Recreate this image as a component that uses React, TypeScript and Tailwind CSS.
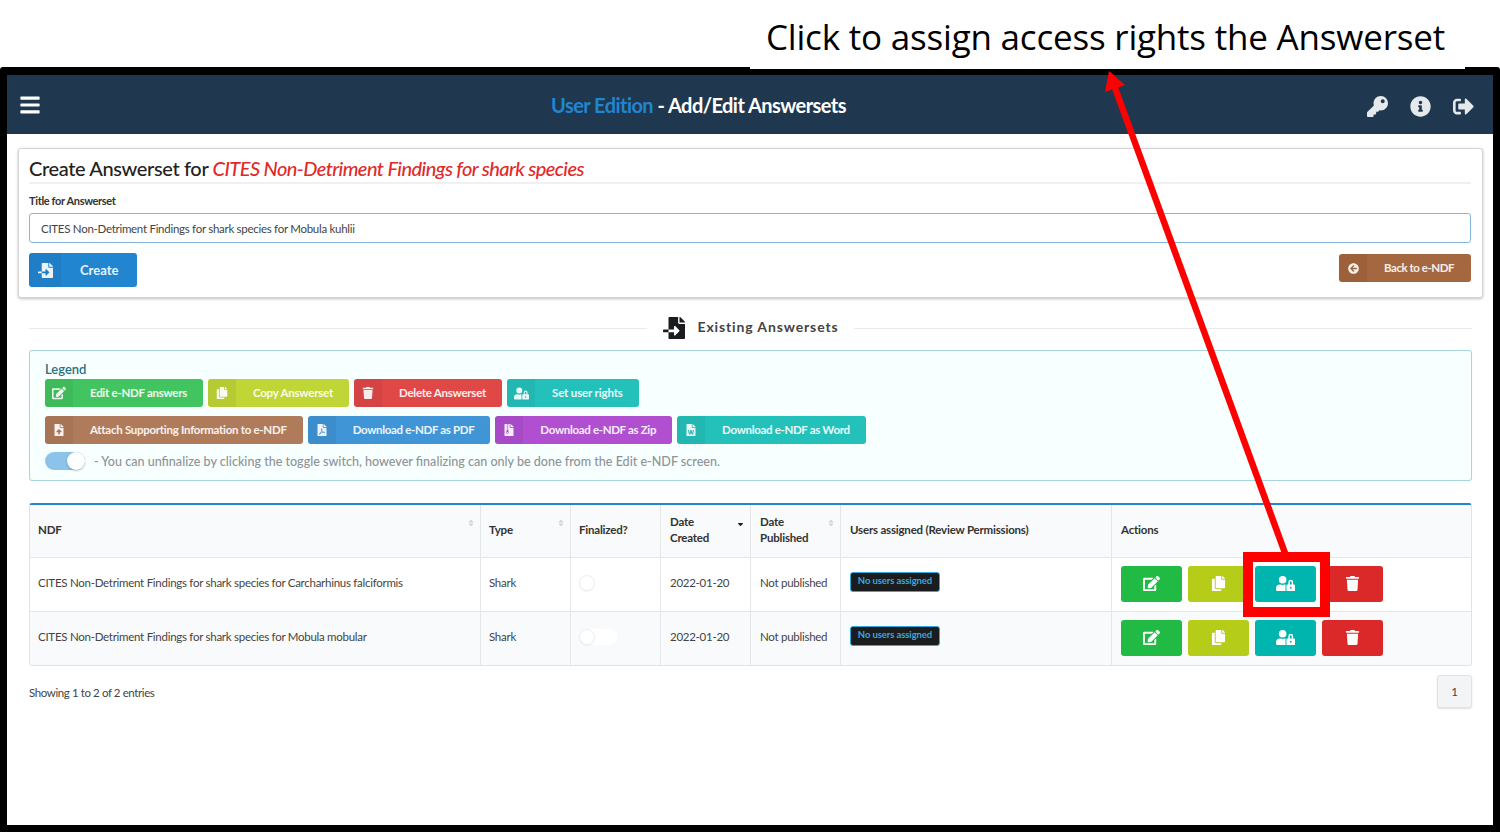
import {
  FaArrowCircleLeft,
  FaBars,
  FaCopy,
  FaEdit,
  FaFileArchive,
  FaFileImport,
  FaFilePdf,
  FaFileUpload,
  FaFileWord,
  FaInfoCircle,
  FaKey,
  FaSignOutAlt,
  FaSort,
  FaSortDown,
  FaTrash,
  FaUserLock,
} from "react-icons/fa";
import type { IconType } from "react-icons";

type LegendItem = { label: string; icon: IconType; size: number; color: string; tracking: string };

const legendTop: LegendItem[] = [
  { label: "Edit e-NDF answers", icon: FaEdit, size: 14, color: "bg-[#42c560]", tracking: "tracking-[-0.28px]" },
  { label: "Copy Answerset", icon: FaCopy, size: 12, color: "bg-[#c0d536]", tracking: "tracking-[-0.22px]" },
  { label: "Delete Answerset", icon: FaTrash, size: 12, color: "bg-[#e04848]", tracking: "tracking-[-0.25px]" },
  { label: "Set user rights", icon: FaUserLock, size: 15, color: "bg-[#24c1ba]", tracking: "tracking-[-0.15px]" },
];

const legendBottom: LegendItem[] = [
  { label: "Attach Supporting Information to e-NDF", icon: FaFileUpload, size: 12, color: "bg-[#b07b5a]", tracking: "tracking-[-0.28px]" },
  { label: "Download e-NDF as PDF", icon: FaFilePdf, size: 12, color: "bg-[#4095d6]", tracking: "tracking-[-0.33px]" },
  { label: "Download e-NDF as Zip", icon: FaFileArchive, size: 12, color: "bg-[#b04fd0]", tracking: "tracking-[-0.33px]" },
  { label: "Download e-NDF as Word", icon: FaFileWord, size: 12, color: "bg-[#24c1ba]", tracking: "tracking-[-0.33px]" },
];

const rows = [
  { name: "CITES Non-Detriment Findings for shark species for Carcharhinus falciformis", bg: "bg-white" },
  { name: "CITES Non-Detriment Findings for shark species for Mobula mobular", bg: "bg-[#f9fafb]" },
];

function LegendButton({ item }: { item: LegendItem }) {
  const Icon = item.icon;
  return (
    <div className={`flex h-[28px] items-center rounded-[3px] text-[11.5px] font-bold text-white/90 ${item.color} ${item.tracking}`}>
      <span className="flex h-full w-[28px] items-center justify-center rounded-l-[3px] bg-black/5">
        <Icon size={item.size} />
      </span>
      <span className="pl-[17px] pr-[16px]">{item.label}</span>
    </div>
  );
}

function ActionButton({ icon: Icon, size, color }: { icon: IconType; size: number; color: string }) {
  return (
    <div className={`flex h-[36px] w-[61px] items-center justify-center rounded-[3px] text-white ${color}`}>
      <Icon size={size} />
    </div>
  );
}

function SortHead({ children, active, first }: { children: React.ReactNode; active?: boolean; first?: boolean }) {
  return (
    <th className={`relative border-r border-[#e4e6e8] pb-[2px] text-left align-middle font-bold leading-[16px] ${first ? "px-[8px]" : "px-[9px]"}`}>
      {children}
      {active ? (
        <FaSortDown size={9} className="absolute right-[5px] top-[13px] text-[#222]" />
      ) : (
        <FaSort size={8} className="absolute right-[5px] top-[14px] text-[#d0d2d4]" />
      )}
    </th>
  );
}

export default function App() {
  return (
    <div className="relative h-[832px] w-[1500px] overflow-hidden bg-white font-['Lato',sans-serif] text-[#333]">
      <div className="relative z-10 -mb-[2px] ml-[750px] flex h-[69px] w-[715px] items-start bg-white pl-[16px] pt-[14px] font-['Open_Sans',sans-serif] text-[35px] leading-[46px] tracking-[-0.2px] text-black">
        Click to assign access rights the Answerset
      </div>

      <div className="h-[765px] rounded-t-[3px] border-x-[7px] border-b-[7px] border-t-[8px] border-black">
        <header className="flex h-[59px] items-center justify-between bg-[#1f384f] pl-[12px] pr-[19px] text-white">
          <FaBars size={22} />
          <div className="-ml-[11px] text-[20px] font-bold tracking-[-0.55px]">
            <span className="text-[#2185d0]">User Edition</span> - Add/Edit Answersets
          </div>
          <div className="mt-[4px] flex items-center gap-[22px] text-[#e6e9ec]">
            <FaKey size={21} />
            <FaInfoCircle size={21} />
            <FaSignOutAlt size={21} />
          </div>
        </header>

        <main className="pl-[11px] pr-[10px] pt-[14px]">
          <section className="h-[150px] rounded-[3px] border border-[#d4d4d5] bg-white pl-[10px] pr-[11px] pt-[7px] shadow-[0_1px_3px_rgba(0,0,0,0.25)]">
            <h1 className="border-b-2 border-[#f0f0f0] pb-[1px] text-[20px] font-medium leading-[25px] tracking-[-0.37px] text-[#222]">
              Create Answerset for{" "}
              <em className="font-medium tracking-[-0.58px] text-[#e02a2a]">CITES Non-Detriment Findings for shark species</em>
            </h1>
            <div className="mt-[10px] text-[11px] font-bold leading-[14px] tracking-[-0.35px]">Title for Answerset</div>
            <div className="mt-[5px] flex h-[30px] items-center rounded-[3px] border border-[#85b7d9] px-[11px] pt-[1px] text-[11.5px] tracking-[-0.28px] text-[#444]">
              CITES Non-Detriment Findings for shark species for Mobula kuhlii
            </div>
            <div className="mt-[10px] flex items-start justify-between">
              <div className="flex h-[34px] w-[108px] items-center rounded-[3px] bg-[#2185d0] text-[13px] font-bold text-white/90">
                <span className="flex h-full w-[32px] items-center justify-center rounded-l-[3px] bg-black/5">
                  <FaFileImport size={15} />
                </span>
                <span className="pl-[19px] pt-[2px]">Create</span>
              </div>
              <div className="mt-[1px] flex h-[28px] w-[132px] items-center rounded-[3px] bg-[#a5673f] text-[11.5px] font-bold tracking-[-0.45px] text-white/90">
                <span className="flex h-full w-[28px] items-center justify-center rounded-l-[3px] bg-black/5">
                  <FaArrowCircleLeft size={11} />
                </span>
                <span className="pl-[17px]">Back to e-NDF</span>
              </div>
            </div>
          </section>

          <div className="mx-[11px] mt-[19px] flex h-[22px] items-center">
            <div className="h-px flex-1 bg-[#e8eaeb]" />
            <div className="flex items-center gap-[12px] pl-[16px] pr-[15px] text-[14px] font-bold tracking-[0.87px] text-[#444]">
              <FaFileImport size={22} className="text-[#1b1c1d]" />
              <span className="pb-[4px]">Existing Answersets</span>
            </div>
            <div className="h-px flex-1 bg-[#e8eaeb]" />
          </div>

          <section className="mx-[11px] mt-[11px] h-[131px] rounded-[3px] border border-[#a9d5de] bg-[#f8ffff] px-[15px] pt-[11px] shadow-[0_0_1px_rgba(0,0,0,0.1)]">
            <div className="text-[13px] font-semibold leading-[15px] text-[#276f86]">Legend</div>
            <div className="mt-[2px] flex gap-[5px]">
              {legendTop.map((item) => (
                <LegendButton key={item.label} item={item} />
              ))}
            </div>
            <div className="mt-[9px] flex gap-[5px]">
              {legendBottom.map((item) => (
                <LegendButton key={item.label} item={item} />
              ))}
            </div>
            <div className="mt-[7px] flex items-center gap-[9px] text-[12.56px] font-medium text-[#8d9396]">
              <div className="relative h-[18px] w-[40px] rounded-full bg-[#8cc3ea]">
                <div className="absolute right-0 top-0 h-[18px] w-[18px] rounded-full bg-white shadow-[0_1px_2px_rgba(0,0,0,0.25)]" />
              </div>
              <span className="pt-[2px]">
                - You can unfinalize by clicking the toggle switch, however finalizing can only be done from the Edit e-NDF screen.
              </span>
            </div>
          </section>

          <table className="mx-[11px] mt-[22px] w-[1443px] table-fixed border-separate border-spacing-0 overflow-hidden rounded-[3px] border border-t-2 border-[#e1e3e5] border-t-[#2185d0] text-[11.5px] tracking-[-0.27px]">
            <colgroup>
              <col className="w-[451px]" />
              <col className="w-[90px]" />
              <col className="w-[90px]" />
              <col className="w-[90px]" />
              <col className="w-[90px]" />
              <col className="w-[271px]" />
              <col />
            </colgroup>
            <thead>
              <tr className="h-[52px] bg-[#f9fafb] tracking-[-0.2px] text-[#333]">
                <SortHead first>NDF</SortHead>
                <SortHead first>Type</SortHead>
                <th className="border-r border-[#e4e6e8] px-[8px] pb-[2px] text-left font-bold">Finalized?</th>
                <SortHead active>
                  Date
                  <br />
                  Created
                </SortHead>
                <SortHead>
                  Date
                  <br />
                  Published
                </SortHead>
                <th className="border-r border-[#e4e6e8] px-[9px] pb-[2px] text-left font-bold">Users assigned (Review Permissions)</th>
                <th className="px-[9px] pb-[2px] text-left font-bold">Actions</th>
              </tr>
            </thead>
            <tbody className="text-[#444]">
              {rows.map((row) => (
                <tr key={row.name} className={`h-[54px] ${row.bg}`}>
                  <td className="border-r border-t border-[#e4e6e8] px-[8px] pb-[3px]">{row.name}</td>
                  <td className="border-r border-t border-[#e4e6e8] px-[8px] pb-[3px]">Shark</td>
                  <td className="border-r border-t border-[#e4e6e8] px-[8px]">
                    <div className="mb-[4px] h-[16px] w-[38px] rounded-full bg-white">
                      <div className="h-[16px] w-[16px] rounded-full border border-[#eeeeee] bg-white shadow-[0_1px_1px_rgba(0,0,0,0.05)]" />
                    </div>
                  </td>
                  <td className="border-r border-t border-[#e4e6e8] px-[9px] pb-[3px]">2022-01-20</td>
                  <td className="border-r border-t border-[#e4e6e8] px-[9px] pb-[3px]">Not published</td>
                  <td className="border-r border-t border-[#e4e6e8] px-[9px]">
                    <div className="mb-[6px] flex h-[20px] w-[90px] items-center justify-center rounded-[3px] border border-[#31a8dd] bg-[#1b1c1d] text-[9.5px] font-bold tracking-[-0.1px] text-[#38a8e0]">
                      No users assigned
                    </div>
                  </td>
                  <td className="border-t border-[#e4e6e8] px-[9px] pb-[2px]">
                    <div className="flex gap-[6px]">
                      <ActionButton icon={FaEdit} size={17} color="bg-[#21ba45]" />
                      <ActionButton icon={FaCopy} size={15} color="bg-[#b5cc18]" />
                      <ActionButton icon={FaUserLock} size={19} color="bg-[#00b5ad]" />
                      <ActionButton icon={FaTrash} size={15} color="bg-[#db2828]" />
                    </div>
                  </td>
                </tr>
              ))}
            </tbody>
          </table>

          <div className="mx-[11px] mt-[9px] flex items-start justify-between text-[11.5px] tracking-[-0.4px] text-[#444]">
            <span className="mt-[9px]">Showing 1 to 2 of 2 entries</span>
            <div className="flex h-[33px] w-[35px] items-center justify-center rounded-[3px] border border-[#e2e2e3] bg-[#f3f4f5] shadow-[0_1px_2px_rgba(0,0,0,0.12)]">
              1
            </div>
          </div>
        </main>
      </div>

      <svg className="pointer-events-none absolute left-0 top-0 z-20" width="1500" height="832">
        <line x1="1285" y1="553" x2="1115" y2="88" stroke="#ff0000" strokeWidth="6.5" />
        <polygon points="1109,71 1125,85 1105,92" fill="#ff0000" />
      </svg>
      <div className="pointer-events-none absolute left-[1243px] top-[552px] z-20 h-[65px] w-[87px] border-[10px] border-[#ff0000]" />
    </div>
  );
}
